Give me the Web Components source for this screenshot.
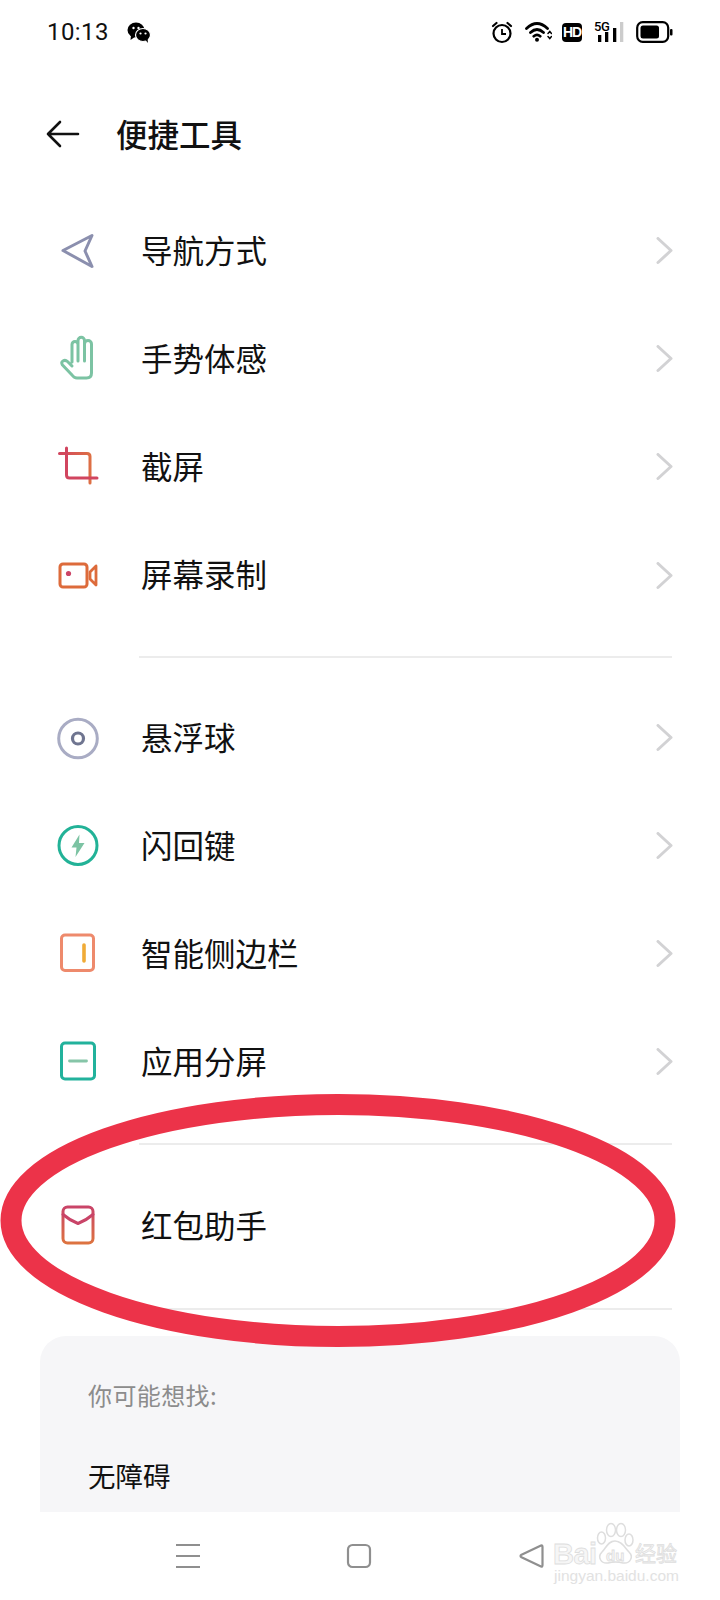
<!DOCTYPE html>
<html lang="zh">
<head>
<meta charset="UTF-8">
<title>便捷工具</title>
<style>
  html, body { margin: 0; background: #fff; }
  body { font-family: "Noto Sans CJK SC", sans-serif; color: #111; }
  phone-page { width: 720px; height: 1600px; }
</style>
</head>
<body>
<phone-page>
  <status-bar></status-bar>
  <app-header title="便捷工具"></app-header>

  <tool-group>
    <tool-row label="导航方式">
      <svg slot="icon" width="48" height="48" viewBox="0 0 48 48" fill="none"><path d="M9 23.500 38 8.500 31 24 38 39.500Z" stroke="#8b8fae" stroke-width="3" stroke-linejoin="round"/></svg>
    </tool-row>
    <tool-row label="手势体感">
      <svg slot="icon" width="48" height="48" viewBox="0 0 48 48" fill="none" stroke="#7cc3a3" stroke-width="3" stroke-linecap="round" stroke-linejoin="round"><path d="M18 27V9.500a3 3 0 0 1 6 0V26M24 9V5.500a3.250 3.250 0 0 1 6.500 0V26M30.500 9a3.500 3.500 0 0 1 7 0V38q0 5-5 5H23q-3 0-5-3L8.500 30q-1.800-2.500 .5-4 2.300-1.500 4.500 .5L18 31"/></svg>
    </tool-row>
    <tool-row label="截屏">
      <svg slot="icon" width="48" height="48" viewBox="0 0 48 48" fill="none" stroke-width="3" stroke-linecap="round" stroke-linejoin="round"><defs><linearGradient id="crop" gradientUnits="userSpaceOnUse" x1="5" x2="43" y1="0" y2="0"><stop offset="0" stop-color="#d1455f"/><stop offset="1" stop-color="#e0783f"/></linearGradient></defs><path d="M5.500 10.500H33q3 0 3 3V40" stroke="url(#crop)"/><path d="M12.500 5V32q0 3 3 3H43" stroke="#d1455f"/></svg>
    </tool-row>
    <tool-row label="屏幕录制">
      <svg slot="icon" width="48" height="48" viewBox="0 0 48 48" fill="none"><rect x="6" y="12" width="27" height="23" rx="3" stroke="#dd6b3b" stroke-width="3"/><circle cx="14.500" cy="21.500" r="2.600" fill="#cc4466"/><path d="M42 14 36 20V27L42 33Z" stroke="#dd6b3b" stroke-width="2.800" stroke-linejoin="round"/></svg>
    </tool-row>
  </tool-group>
  <tool-group>
    <tool-row label="悬浮球">
      <svg slot="icon" width="48" height="48" viewBox="0 0 48 48" fill="none"><circle cx="24" cy="24.500" r="19.300" stroke="#a9acc4" stroke-width="3"/><circle cx="24" cy="24.500" r="5.500" stroke="#6f7590" stroke-width="3.200"/></svg>
    </tool-row>
    <tool-row label="闪回键">
      <svg slot="icon" width="48" height="48" viewBox="0 0 48 48" fill="none"><circle cx="24" cy="23.500" r="19" stroke="#22b297" stroke-width="3"/><path d="M25.500 12.500 17.500 25.500H22.500L21.500 35 30.500 21H25Z" fill="#7cc3a3"/></svg>
    </tool-row>
    <tool-row label="智能侧边栏">
      <svg slot="icon" width="48" height="48" viewBox="0 0 48 48" fill="none"><rect x="7.500" y="5" width="32" height="35.500" rx="3.500" stroke="#ee8a6c" stroke-width="3"/><path d="M30 15V31" stroke="#f0ab36" stroke-width="3.600" stroke-linecap="round"/></svg>
    </tool-row>
    <tool-row label="应用分屏">
      <svg slot="icon" width="48" height="48" viewBox="0 0 48 48" fill="none"><rect x="7.500" y="5" width="33" height="36" rx="3.500" stroke="#22b29c" stroke-width="3"/><path d="M15.500 23H32.500" stroke="#86c5a8" stroke-width="2.800" stroke-linecap="round"/></svg>
    </tool-row>
  </tool-group>
  <tool-group>
    <tool-row label="红包助手" plain>
      <svg slot="icon" width="48" height="48" viewBox="0 0 48 48" fill="none" stroke-width="3" stroke-linecap="round" stroke-linejoin="round"><defs><linearGradient id="env" gradientUnits="userSpaceOnUse" x1="0" x2="0" y1="5" y2="41"><stop offset="0" stop-color="#c94468"/><stop offset="1" stop-color="#dd7340"/></linearGradient></defs><rect x="9" y="5" width="30" height="36" rx="4.500" stroke="url(#env)"/><path d="M9 12.500Q16 18.500 24 21.500 32 18.500 39 12.500" stroke="#c94468"/></svg>
    </tool-row>
  </tool-group>

  <hint-card title="你可能想找:">
    <span>无障碍</span>
  </hint-card>
  <nav-bar></nav-bar>
  <ring-mark></ring-mark>
  <baidu-mark></baidu-mark>
</phone-page>

<script>
  class PhonePage extends HTMLElement {
    connectedCallback() {
      this.attachShadow({ mode: 'open' });
      this.shadowRoot.innerHTML = `
        <style>
          :host { display: flex; flex-direction: column; position: relative; overflow: hidden; background: #fff; }
        </style>
        <slot></slot>`;
    }
  }

  class StatusBar extends HTMLElement {
    connectedCallback() {
      this.attachShadow({ mode: 'open' });
      this.shadowRoot.innerHTML = `
        <style>
          :host { display: flex; align-items: center; height: 64px; padding: 0 47px 0 47px; flex: none; }
          .time { font: 400 24px/1 Roboto, sans-serif; color: #111; width: 80px; letter-spacing: .4px; }
          .right { margin-left: auto; display: flex; align-items: center; }
          svg { display: block; }
          .hd { width: 20px; height: 19px; border-radius: 4px; background: #000; color: #fff; font: 700 14px/19px "Liberation Sans", sans-serif; text-align: center; margin: 0 12px 0 10px; letter-spacing: -1px; }
          .net { position: relative; width: 30px; height: 20px; }
          .net span { position: absolute; left: 0; top: 0; font: 500 13px/10px Roboto, sans-serif; color: #000; letter-spacing: -.3px; }
          .net svg { position: absolute; left: 0; top: 0; }
        </style>
        <span class="time">10:13</span>
        <svg width="24" height="21" viewBox="0 0 24 21">
          <ellipse cx="9" cy="8" rx="8.500" ry="7.500"/><path d="M4 13 3.500 18l5-3.500Z"/>
          <ellipse cx="16" cy="13" rx="7.500" ry="6.500" stroke="#fff" stroke-width="1.200"/><path d="M18.500 18l2.500 3-.5-4.500Z"/>
          <circle cx="6.500" cy="6" r="1.200" fill="#fff"/><circle cx="11.500" cy="6" r="1.200" fill="#fff"/>
          <circle cx="13.500" cy="11.500" r="1.100" fill="#fff"/><circle cx="18.500" cy="11.500" r="1.100" fill="#fff"/>
        </svg>
        <div class="right">
          <svg width="24" height="24" viewBox="0 0 24 24" fill="none" stroke="#000" stroke-width="2.200" style="margin-right:11px">
            <circle cx="12" cy="13.500" r="8.500"/><path d="M12 9V14H16" stroke-width="1.800"/><path d="M3 6 6.500 3M21 6 17.500 3" stroke-linecap="round"/>
          </svg>
          <svg width="27" height="20" viewBox="0 0 27 20" fill="none" stroke="#000" stroke-width="2.800" stroke-linecap="round">
            <path d="M1.500 6.500Q12-3.500 22.500 6.500M5.500 10.500Q12 4.500 18.500 10.500M8.800 14.200Q12 11.500 15.200 14.200"/><circle cx="12" cy="17.800" r="2" fill="#000" stroke="none"/>
            <path d="M23 11.500 24.800 9.500 26.500 11.500M23 14.500 24.800 16.500 26.500 14.500" stroke-width="1.500"/>
          </svg>
          <div class="hd">HD</div>
          <div class="net">
            <span>5G</span>
            <svg width="30" height="20" viewBox="0 0 30 20"><rect x="4" y="13" width="3.300" height="7"/><rect x="11" y="10" width="3.300" height="10"/><rect x="19" y="6" width="3.300" height="14"/><rect x="26" y="0" width="3.300" height="20" fill="#ccc"/></svg>
          </div>
          <svg width="37" height="22" viewBox="0 0 37 22" style="margin-left:12px">
            <rect x="1.200" y="1.200" width="31" height="19.600" rx="5.500" fill="none" stroke="#000" stroke-width="2.200"/><rect x="4.500" y="4.500" width="18.500" height="13" rx="2.500"/><rect x="34" y="8" width="2.500" height="6.500" rx="1"/>
          </svg>
        </div>`;
    }
  }

  class AppHeader extends HTMLElement {
    connectedCallback() {
      this.attachShadow({ mode: 'open' });
      this.shadowRoot.innerHTML = `
        <style>
          :host { display: flex; align-items: center; flex: none; height: 100px; margin: 20px 0 13px; padding-left: 46px; }
          svg { display: block; margin-right: 36px; }
          h1 { margin: 0; font: 500 31.500px/1 "Noto Sans CJK SC", sans-serif; color: #111; }
        </style>
        <svg width="34" height="28" viewBox="0 0 34 28" fill="none" stroke="#111" stroke-width="2.600" stroke-linecap="round" stroke-linejoin="round"><path d="M32 14H2M14 2 2 14 14 26"/></svg>
        <h1>${this.getAttribute('title')}</h1>`;
    }
  }

  class ToolGroup extends HTMLElement {
    connectedCallback() {
      this.attachShadow({ mode: 'open' });
      this.shadowRoot.innerHTML = `
        <style>
          :host { display: block; flex: none; }
          .line { height: 2px; margin: 26px 48px 26px 139px; background: #ececec; }
        </style>
        <slot></slot>
        <div class="line"></div>`;
    }
  }

  class ToolRow extends HTMLElement {
    connectedCallback() {
      this.attachShadow({ mode: 'open' });
      let chevron = this.hasAttribute('plain') ? '' :
        `<svg class="chev" width="18" height="28" viewBox="0 0 18 28" fill="none" stroke="#d2d2d4" stroke-width="3" stroke-linecap="round" stroke-linejoin="round"><path d="M3 1.500 16 13.500 3 25.500"/></svg>`;
      this.shadowRoot.innerHTML = `
        <style>
          :host { display: flex; align-items: center; height: 108.200px; padding: 0 47px 0 54px; }
          :host([plain]) { height: 111px; }
          ::slotted(svg) { display: block; flex: none; }
          .label { margin: 0 0 3px 39px; font: 400 31.500px/1 "Noto Sans CJK SC", sans-serif; color: #111; }
          .chev { margin-left: auto; }
        </style>
        <slot name="icon"></slot>
        <span class="label">${this.getAttribute('label')}</span>
        ${chevron}`;
    }
  }

  class HintCard extends HTMLElement {
    connectedCallback() {
      this.attachShadow({ mode: 'open' });
      this.shadowRoot.innerHTML = `
        <style>
          :host { display: block; flex: none; box-sizing: border-box; height: 176px; margin: 0 40px; padding: 46px 48px 0 48px; background: #f6f6f8; border-radius: 26px 26px 0 0; overflow: hidden; }
          .title { font: 400 24px/26px "Noto Sans CJK SC", sans-serif; color: #8c8c8c; letter-spacing: .4px; }
          .items { margin-top: 52px; font: 400 27.500px/30px "Noto Sans CJK SC", sans-serif; color: #111; }
        </style>
        <div class="title">${this.getAttribute('title')}</div>
        <div class="items"><slot></slot></div>`;
    }
  }

  class NavBar extends HTMLElement {
    connectedCallback() {
      this.attachShadow({ mode: 'open' });
      this.shadowRoot.innerHTML = `
        <style>
          :host { display: flex; flex: none; height: 88px; align-items: flex-start; padding: 30px 0 0 174px; }
          svg { display: block; }
          .home { margin-left: 143px; }
          .back { margin-left: 144px; }
        </style>
        <svg width="28" height="28" viewBox="0 0 28 28" stroke="#8f8f8f" stroke-width="2.200" fill="none"><path d="M2 3H26M2 14H26M2 25H26"/></svg>
        <svg class="home" width="28" height="28" viewBox="0 0 28 28" stroke="#8f8f8f" stroke-width="2.200" fill="none"><rect x="3" y="3" width="22" height="22" rx="4.500"/></svg>
        <svg class="back" width="28" height="28" viewBox="0 0 28 28" stroke="#8f8f8f" stroke-width="2.200" fill="none" stroke-linejoin="round"><path d="M24 3.500Q25.500 3 25.500 5V23Q25.500 25 24 24.500L4.500 15.300Q2.500 14 4.500 12.700Z"/></svg>`;
    }
  }

  // 빨간 동그라미: 스크린샷 위에 손으로 그린 표시
  class RingMark extends HTMLElement {
    connectedCallback() {
      this.attachShadow({ mode: 'open' });
      this.shadowRoot.innerHTML = `
        <style>
          :host { position: absolute; left: 0; top: 1080px; display: block; width: 720px; height: 280px; pointer-events: none; }
          svg { display: block; }
        </style>
        <svg width="720" height="280" viewBox="0 1080 720 280" fill="none"><ellipse cx="338" cy="1220.500" rx="327" ry="116" stroke="#ec3349" stroke-width="21"/></svg>`;
    }
  }

  class BaiduMark extends HTMLElement {
    connectedCallback() {
      this.attachShadow({ mode: 'open' });
      this.shadowRoot.innerHTML = `
        <style>
          :host { position: absolute; left: 552px; top: 1520px; width: 132px; height: 66px; display: block; }
          span { position: absolute; white-space: nowrap; color: #f6f6f6; -webkit-text-stroke: .8px #dedede; }
          .bai { left: 1px; top: 21px; font: 700 29px/26px "Liberation Sans", sans-serif; letter-spacing: -.5px; }
          .du { left: 54px; top: 29px; font: 700 15px/14px "Liberation Sans", sans-serif; }
          .jy { left: 83px; top: 20px; font: 400 21px/24px "Noto Sans CJK SC", sans-serif; }
          .url { left: 2px; top: 48px; font: 400 15.500px/16px "Liberation Sans", sans-serif; color: #e2e2e2; -webkit-text-stroke: 0; }
          svg { position: absolute; left: 46px; top: 3px; overflow: visible; }
        </style>
        <svg width="36" height="41" viewBox="0 0 36 41" fill="none" stroke="#dedede" stroke-width="1.500"><ellipse cx="3.500" cy="15" rx="4" ry="6"/><ellipse cx="13" cy="7" rx="4.500" ry="6.500"/><ellipse cx="23" cy="7" rx="4.500" ry="6.500"/><ellipse cx="31" cy="17" rx="4" ry="6"/><path d="M17 18C10 18 8 25 4 29-1 34 3 41 10 40 14 39 21 39 25 40 32 41 36 34 31 29 27 25 24 18 17 18Z"/></svg>
        <span class="bai">Bai</span><span class="du">du</span><span class="jy">经验</span><span class="url">jingyan.baidu.com</span>`;
    }
  }

  customElements.define('phone-page', PhonePage);
  customElements.define('status-bar', StatusBar);
  customElements.define('app-header', AppHeader);
  customElements.define('tool-group', ToolGroup);
  customElements.define('tool-row', ToolRow);
  customElements.define('hint-card', HintCard);
  customElements.define('nav-bar', NavBar);
  customElements.define('ring-mark', RingMark);
  customElements.define('baidu-mark', BaiduMark);
</script>
</body>
</html>
